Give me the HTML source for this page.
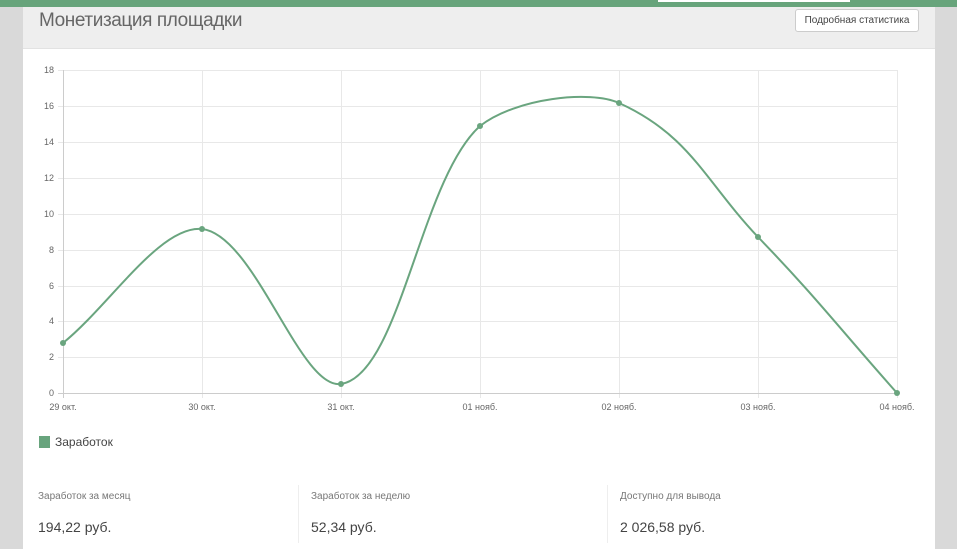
<!DOCTYPE html>
<html><head><meta charset="utf-8"><style>
*{margin:0;padding:0;box-sizing:border-box}
body{width:957px;height:549px;background:#d9d9d9;position:relative;overflow:hidden;font-family:"Liberation Sans",sans-serif}
.top{position:absolute;left:0;top:0;width:957px;height:7px;background:#67a47b}
.inp{position:absolute;left:658px;top:0;width:192px;height:2px;background:#fff}
.card{position:absolute;left:23px;top:7px;width:912px;height:542px;background:#fff}
.hdr{height:42px;background:#eeeeee;border-bottom:1px solid #e2e2e2;position:relative}
.hdr h1{position:absolute;left:16px;top:3px;font-weight:normal;font-size:19px;color:#666;letter-spacing:-0.4px}
.btn{position:absolute;left:772px;top:2px;width:124px;height:23px;border:1px solid #ccc;border-radius:3px;background:#fff;font-size:10px;color:#444;text-align:center;line-height:21px}
.leg{position:absolute;left:16px;top:428px;font-size:12px;color:#444}
.leg i{display:inline-block;width:11px;height:12px;background:#68a47d;vertical-align:-2px;margin-right:5px}
.st{position:absolute;top:478px;height:58px;font-size:10px;color:#777;padding-top:6px}
.st b{display:block;font-weight:normal;font-size:14px;color:#444;margin-top:17px}
svg{position:absolute;left:0;top:0}
</style></head><body>
<div class="top"><div class="inp"></div></div>
<div class="card">
<div class="hdr"><h1>Монетизация площадки</h1><div class="btn">Подробная статистика</div></div>
<div class="leg"><i></i>Заработок</div>
<div class="st" style="left:15px">Заработок за месяц<b>194,22 руб.</b></div>
<div class="st" style="left:275px;border-left:1px solid #eee;padding-left:12px">Заработок за неделю<b>52,34 руб.</b></div>
<div class="st" style="left:584px;border-left:1px solid #eee;padding-left:12px">Доступно для вывода<b>2 026,58 руб.</b></div>
</div>
<svg width="957" height="549" font-family="Liberation Sans, sans-serif" font-size="9" fill="#666">
<g stroke="#e8e8e8" stroke-width="1">
<line x1="58" y1="70.5" x2="897" y2="70.5"/><line x1="58" y1="106.5" x2="897" y2="106.5"/><line x1="58" y1="142.5" x2="897" y2="142.5"/><line x1="58" y1="178.5" x2="897" y2="178.5"/><line x1="58" y1="214.5" x2="897" y2="214.5"/><line x1="58" y1="250.5" x2="897" y2="250.5"/><line x1="58" y1="286.5" x2="897" y2="286.5"/><line x1="58" y1="321.5" x2="897" y2="321.5"/><line x1="58" y1="357.5" x2="897" y2="357.5"/>
<line x1="202.5" y1="70" x2="202.5" y2="398"/><line x1="341.5" y1="70" x2="341.5" y2="398"/><line x1="480.5" y1="70" x2="480.5" y2="398"/><line x1="619.5" y1="70" x2="619.5" y2="398"/><line x1="758.5" y1="70" x2="758.5" y2="398"/><line x1="897.5" y1="70" x2="897.5" y2="398"/>
</g>
<g stroke="#ccc"><line x1="58" y1="393.5" x2="897" y2="393.5"/><line x1="63.5" y1="70" x2="63.5" y2="398"/></g>
<g text-anchor="end"><text x="54" y="73">18</text><text x="54" y="109">16</text><text x="54" y="145">14</text><text x="54" y="181">12</text><text x="54" y="217">10</text><text x="54" y="253">8</text><text x="54" y="289">6</text><text x="54" y="324">4</text><text x="54" y="360">2</text><text x="54" y="396">0</text></g>
<g text-anchor="middle"><text x="63" y="410">29 окт.</text><text x="202" y="410">30 окт.</text><text x="341" y="410">31 окт.</text><text x="480" y="410">01 нояб.</text><text x="619" y="410">02 нояб.</text><text x="758" y="410">03 нояб.</text><text x="897" y="410">04 нояб.</text></g>
<path d="M63,343 C110,305 160,225 202,229 C255,235 300,390 341,384 C400,375 420,180 480,126 C516,98 590,90 619,103 C690,135 705,181 758,237 C816,297 841.4,330.6 897,393" fill="none" stroke="#6aa57f" stroke-width="2"/>
<g fill="#6aa57f"><circle cx="63" cy="343" r="3"/><circle cx="202" cy="229" r="3"/><circle cx="341" cy="384" r="3"/><circle cx="480" cy="126" r="3"/><circle cx="619" cy="103" r="3"/><circle cx="758" cy="237" r="3"/><circle cx="897" cy="393" r="3"/></g>
</svg>
</body></html>
